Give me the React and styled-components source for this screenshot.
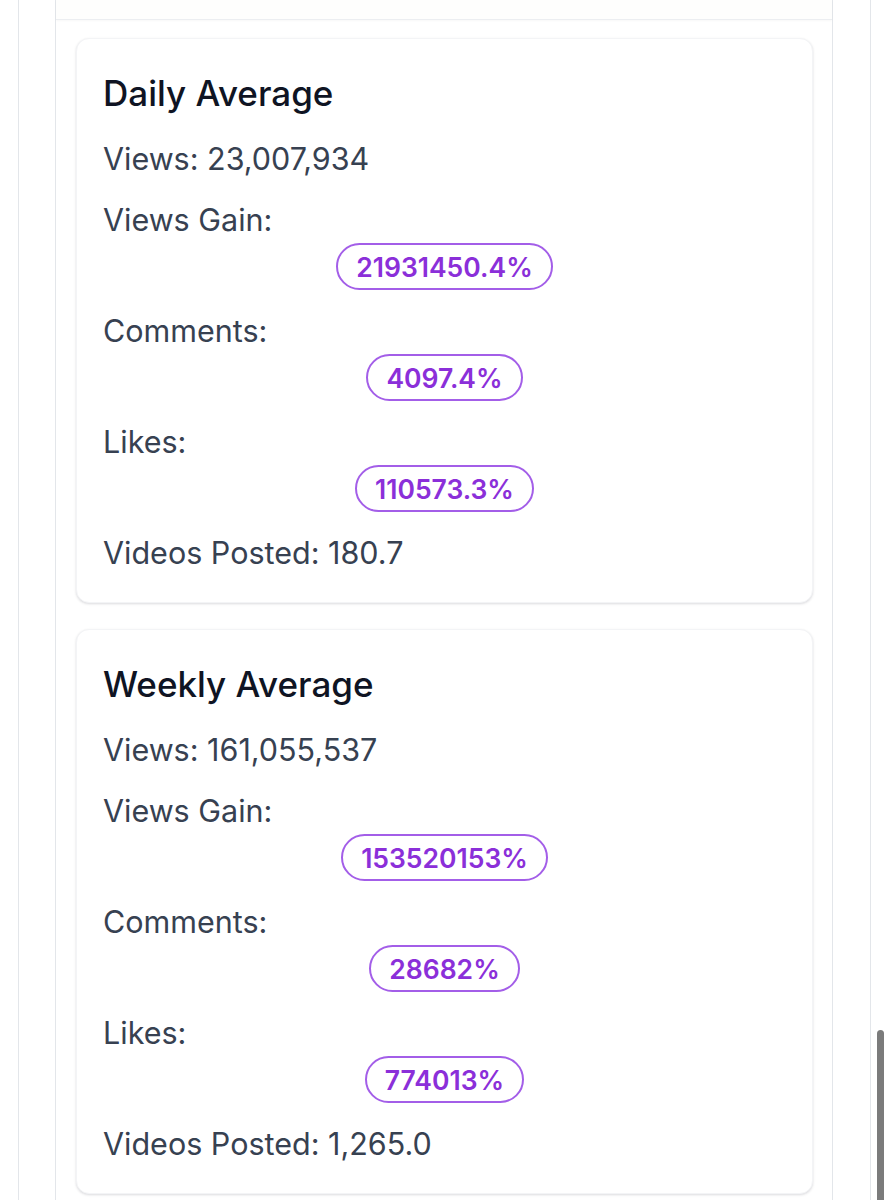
import React from "react";
import styled, { createGlobalStyle } from "styled-components";

const Global = createGlobalStyle`
  html, body { margin: 0; padding: 0; background: #ffffff; }
  body { font-family: Inter, "Noto Sans", sans-serif; overflow: hidden; }
`;

const Frame = styled.div`
  margin: 0 18px;
  width: 853px;
  min-height: 1200px;
  border-left: 1px solid #e3e6ea;
  border-right: 1px solid #e3e6ea;
  box-sizing: border-box;
  padding-left: 36px;
  padding-right: 37px;
`;

const Panel = styled.div`
  border-left: 1px solid #e3e6ea;
  border-right: 1px solid #e3e6ea;
  min-height: 1200px;
  box-sizing: border-box;
`;

const TopSection = styled.div`
  height: 19px;
  background: #fefefd;
  border-bottom: 1px solid #eceef1;
  box-shadow: 0 1px 2px rgba(0, 0, 0, 0.03);
`;

const CardList = styled.div`
  display: flex;
  flex-direction: column;
  gap: 26px;
  padding: 18px 19px 0 20px;
`;

const Card = styled.section`
  background: #fff;
  border: 1px solid #f3f4f6;
  border-radius: 13px;
  box-shadow: 0 1px 3px rgba(15, 23, 42, 0.1), 0 1px 2px rgba(15, 23, 42, 0.05);
  padding: 31px 26px 29px;
  display: flex;
  flex-direction: column;
  gap: 21px;
`;

const Title = styled.h2`
  margin: 0 0 2px;
  font-size: 35px;
  line-height: 46px;
  font-weight: 500;
  color: #0f1423;
`;

const Stat = styled.div`
  font-size: 30.5px;
  line-height: 40px;
  color: #374151;
  font-weight: 400;
`;

const Group = styled.div`
  display: flex;
  flex-direction: column;
  gap: 3px;
`;

const BadgeRow = styled.div`
  display: flex;
  justify-content: center;
`;

const Badge = styled.span`
  display: inline-flex;
  align-items: center;
  height: 47px;
  box-sizing: border-box;
  padding: 0 18px;
  border: 2px solid #a35ee8;
  border-radius: 999px;
  color: #8b2fd9;
  font-size: 26.5px;
  font-weight: 600;
`;

const ScrollThumb = styled.div`
  position: fixed;
  left: 877px;
  top: 1030px;
  width: 7px;
  height: 200px;
  border-radius: 4px;
  background: #7b7b7b;
`;

const cards = [
  {
    title: "Daily Average",
    views: "23,007,934",
    gain: "21931450.4%",
    comments: "4097.4%",
    likes: "110573.3%",
    videos: "180.7",
  },
  {
    title: "Weekly Average",
    views: "161,055,537",
    gain: "153520153%",
    comments: "28682%",
    likes: "774013%",
    videos: "1,265.0",
  },
];

function BadgeStat({ label, value }) {
  return (
    <Group>
      <Stat>{label}</Stat>
      <BadgeRow>
        <Badge>{value}</Badge>
      </BadgeRow>
    </Group>
  );
}

export default function App() {
  return (
    <>
      <Global />
      <Frame>
        <Panel>
          <TopSection />
          <CardList>
            {cards.map((c) => (
              <Card key={c.title}>
                <Title>{c.title}</Title>
                <Stat>Views: {c.views}</Stat>
                <BadgeStat label="Views Gain:" value={c.gain} />
                <BadgeStat label="Comments:" value={c.comments} />
                <BadgeStat label="Likes:" value={c.likes} />
                <Stat>Videos Posted: {c.videos}</Stat>
              </Card>
            ))}
          </CardList>
        </Panel>
      </Frame>
      <ScrollThumb />
    </>
  );
}
